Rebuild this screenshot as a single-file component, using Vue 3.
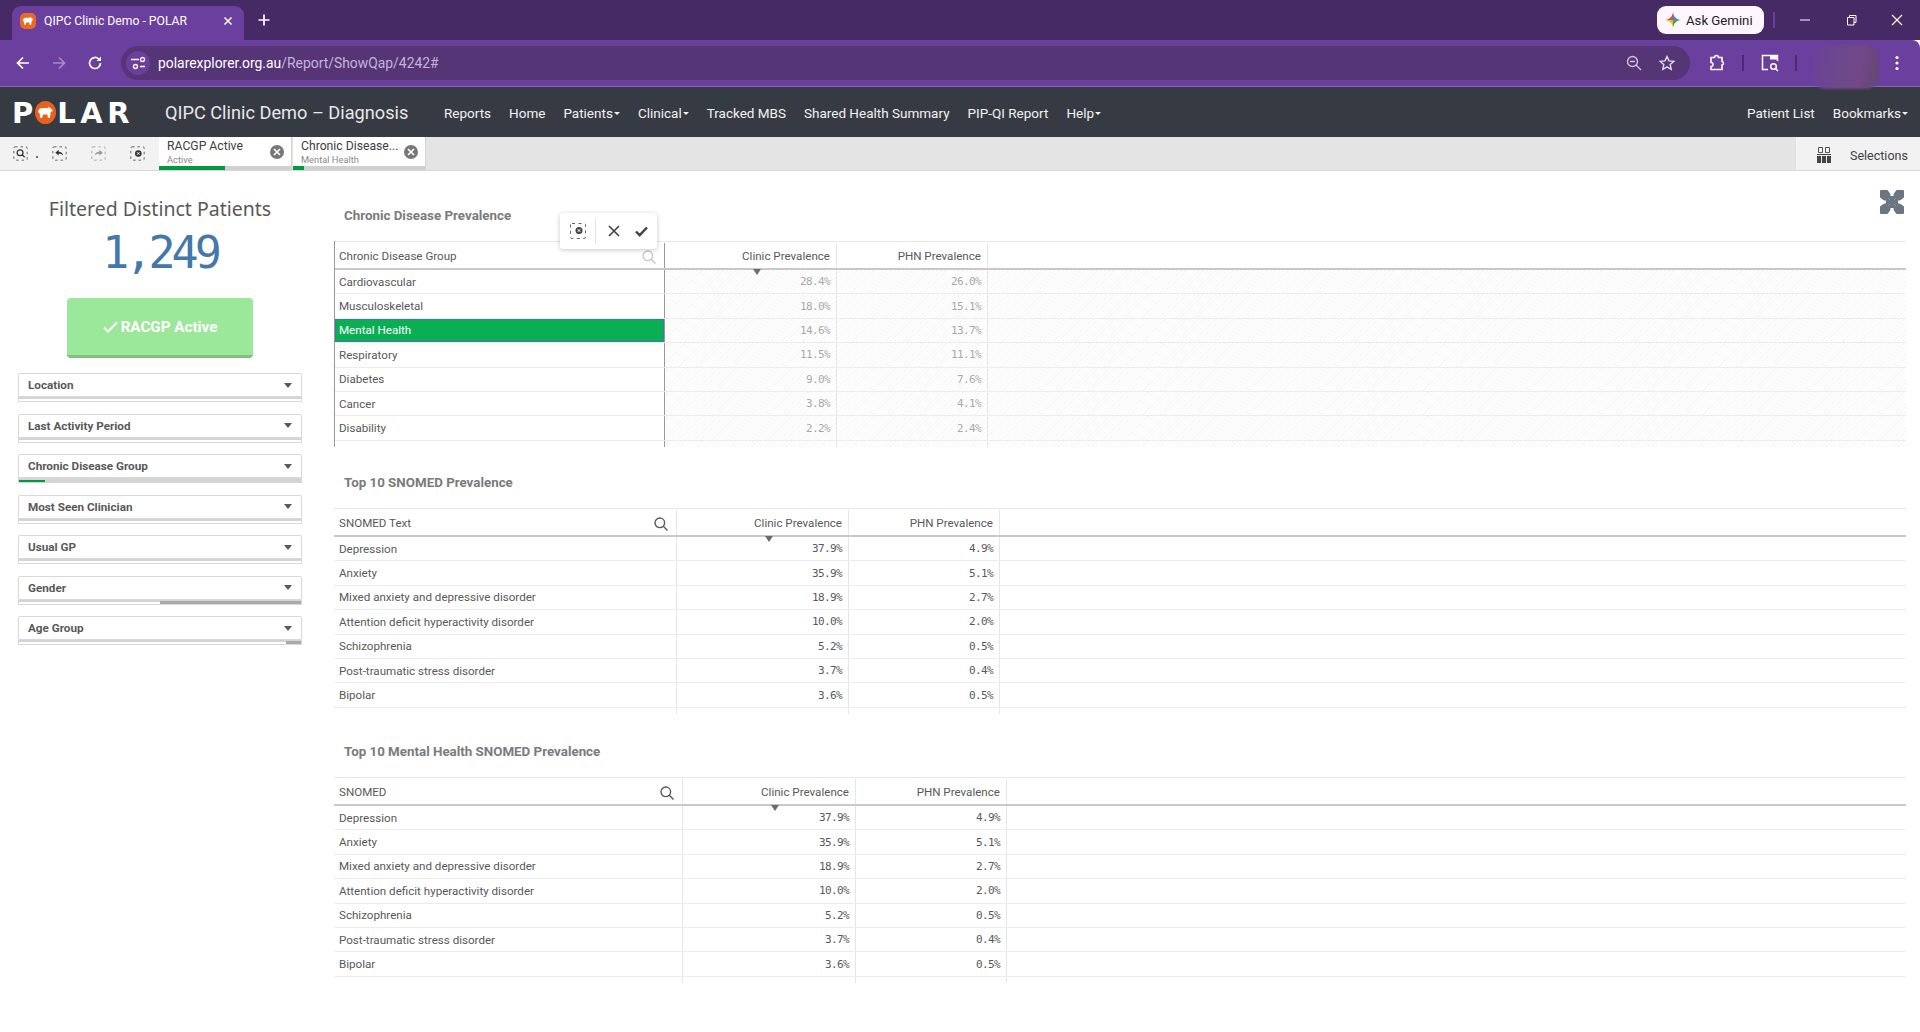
<script setup>
const navLeft = [
  { label: "Reports" },
  { label: "Home" },
  { label: "Patients", caret: true },
  { label: "Clinical", caret: true },
  { label: "Tracked MBS" },
  { label: "Shared Health Summary" },
  { label: "PIP-QI Report" },
  { label: "Help", caret: true },
];

const filters = [
  { name: "Location" },
  { name: "Last Activity Period" },
  { name: "Chronic Disease Group", bar: "green" },
  { name: "Most Seen Clinician" },
  { name: "Usual GP" },
  { name: "Gender", bar: "half" },
  { name: "Age Group", bar: "tiny" },
];

const snomedRows = [
  ["Depression", "37.9%", "4.9%"],
  ["Anxiety", "35.9%", "5.1%"],
  ["Mixed anxiety and depressive disorder", "18.9%", "2.7%"],
  ["Attention deficit hyperactivity disorder", "10.0%", "2.0%"],
  ["Schizophrenia", "5.2%", "0.5%"],
  ["Post-traumatic stress disorder", "3.7%", "0.4%"],
  ["Bipolar", "3.6%", "0.5%"],
  ["Obsessive compulsive disorder", "3.0%", "0.4%"],
];

const tables = [
  {
    key: "t1",
    title: "Chronic Disease Prevalence",
    head: "Chronic Disease Group",
    faded: true,
    rows: [
      ["Cardiovascular", "28.4%", "26.0%"],
      ["Musculoskeletal", "18.0%", "15.1%"],
      ["Mental Health", "14.6%", "13.7%"],
      ["Respiratory", "11.5%", "11.1%"],
      ["Diabetes", "9.0%", "7.6%"],
      ["Cancer", "3.8%", "4.1%"],
      ["Disability", "2.2%", "2.4%"],
      ["", "", ""],
    ],
  },
  { key: "t2", title: "Top 10 SNOMED Prevalence", head: "SNOMED Text", rows: snomedRows },
  {
    key: "t3",
    title: "Top 10 Mental Health SNOMED Prevalence",
    head: "SNOMED",
    rows: [...snomedRows.slice(0, 7), ["", "", ""]],
  },
];
</script>

<template>
  <div class="page">
    <!-- browser chrome -->
    <div class="tabstrip">
      <div class="tab">
        <span class="favicon">
          <svg width="12" height="10" viewBox="0 0 13 10"><path d="M1 4C1 2 3 1.500 5 1.500H8L9 .8l1 .7C11 2 12 3 12 4l-1.500.5L10 9H8.300L8 6.500H4.500L4 9H2.300L2 5.500C1.300 5.500 1 5 1 4z" fill="#fff"/></svg>
        </span>
        <span class="tab-title">QIPC Clinic Demo - POLAR</span>
        <svg class="tab-x" width="10" height="10" viewBox="0 0 10 10"><path d="M1.500 1.500l7 7M8.500 1.500l-7 7" stroke="#fff" stroke-width="1.500"/></svg>
      </div>
      <svg class="tab-plus" width="12" height="12" viewBox="0 0 12 12"><path d="M6 .5v11M.5 6h11" stroke="#fff" stroke-width="1.700"/></svg>
      <div class="gemini">
        <svg width="16" height="16" viewBox="0 0 16 16">
          <path d="M8 0C8.400 4.500 8 8 8 8H0C4.500 7.600 7.600 4.500 8 0z" fill="#e8453c"/>
          <path d="M8 0C8.400 4.500 11.500 7.600 16 8H8z" fill="#4285f4"/>
          <path d="M8 16C7.600 11.500 4.500 8.400 0 8h8z" fill="#fbbc05"/>
          <path d="M8 16c.4-4.500 3.500-7.600 8-8H8z" fill="#34a853"/>
        </svg>
        <span>Ask Gemini</span>
      </div>
      <span class="gem-sep"></span>
      <svg class="win-min" width="12" height="12" viewBox="0 0 12 12"><path d="M1 6h10" stroke="#fff" stroke-width="1"/></svg>
      <svg class="win-max" width="12" height="12" viewBox="0 0 12 12"><path d="M2.500 3.500h6.500v7.500H2.500zM4.500 3.500V1.500H11v7H9" fill="none" stroke="#fff" stroke-width="1"/></svg>
      <svg class="win-close" width="12" height="12" viewBox="0 0 12 12"><path d="M1 1l10 10M11 1L1 11" stroke="#fff" stroke-width="1.100"/></svg>
    </div>

    <div class="toolbar">
      <svg class="tb-back" width="16" height="16" viewBox="0 0 16 16"><path d="M14 8H3M8 2.500L2.500 8 8 13.500" fill="none" stroke="#fff" stroke-width="1.700"/></svg>
      <svg class="tb-fwd" width="16" height="16" viewBox="0 0 16 16"><path d="M2 8h11M8 2.500L13.500 8 8 13.500" fill="none" stroke="#a48cc4" stroke-width="1.700"/></svg>
      <svg class="tb-reload" width="16" height="16" viewBox="0 0 16 16"><path d="M13.500 8A5.500 5.500 0 1 1 11.800 4" fill="none" stroke="#fff" stroke-width="1.700"/><path d="M14 1.500v4.500H9.500z" fill="#fff"/></svg>
      <div class="address">
        <span class="site-info">
          <svg width="16" height="16" viewBox="0 0 16 16"><path d="M1 4.500h8M10 11.500h5" stroke="#fff" stroke-width="1.300"/><circle cx="12.500" cy="4.500" r="2" fill="none" stroke="#fff" stroke-width="1.300"/><circle cx="5.500" cy="11.500" r="2" fill="none" stroke="#fff" stroke-width="1.300"/></svg>
        </span>
        <span class="url"><b>polarexplorer.org.au</b>/Report/ShowQap/4242#</span>
        <svg class="addr-zoom" width="16" height="16" viewBox="0 0 16 16"><circle cx="6.500" cy="6.500" r="5" fill="none" stroke="#cfc4dc" stroke-width="1.400"/><path d="M10 10l5 5M4 6.500h5" stroke="#cfc4dc" stroke-width="1.400"/></svg>
        <svg class="addr-star" width="16" height="16" viewBox="0 0 16 16"><path d="M8 1.500l2 4.400 4.800.5-3.600 3.200 1 4.700L8 11.900l-4.200 2.400 1-4.700L1.200 6.400 6 5.900z" fill="none" stroke="#e4dcec" stroke-width="1.400"/></svg>
      </div>
      <svg class="tb-ext" width="18" height="18" viewBox="0 0 18 18"><path d="M3 3.500h3.500a2 2 0 0 1 4 0H14v4a1.800 1.800 0 0 1 0 3.500v4.500H3v-3a2 2 0 0 0 0-4z" fill="none" stroke="#fff" stroke-width="1.600"/></svg>
      <span class="tb-sep"></span>
      <svg class="tb-search" width="18" height="18" viewBox="0 0 18 18"><path d="M7 15.500H1.500V1.500H16.500V7" fill="none" stroke="#fff" stroke-width="1.500"/><path d="M9 1.500h7.500v4H9z" fill="#fff"/><circle cx="12.500" cy="12.500" r="2.800" fill="none" stroke="#fff" stroke-width="1.500"/><path d="M14.500 14.500l2.500 2.500" stroke="#fff" stroke-width="1.500"/></svg>
      <span class="tb-sep"></span>
      <span class="avatar"></span>
      <svg class="tb-menu" width="4" height="16" viewBox="0 0 4 16"><circle cx="2" cy="2.500" r="1.600" fill="#fff"/><circle cx="2" cy="8" r="1.600" fill="#fff"/><circle cx="2" cy="13.500" r="1.600" fill="#fff"/></svg>
    </div>

    <!-- polar nav -->
    <nav class="nav">
      <div class="logo">
        <span>P</span>
        <span class="logo-o">
          <svg width="17" height="13" viewBox="0 0 13 10"><path d="M1 4C1 2 3 1.500 5 1.500H8L9 .8l1 .7C11 2 12 3 12 4l-1.500.5L10 9H8.300L8 6.500H4.500L4 9H2.300L2 5.500C1.300 5.500 1 5 1 4z" fill="#fff"/></svg>
        </span>
        <span class="logo-lar">LAR</span>
      </div>
      <span class="nav-title">QIPC Clinic Demo – Diagnosis</span>
      <a v-for="n in navLeft" :key="n.label" class="nav-link">{{ n.label }}<i v-if="n.caret" class="caret"></i></a>
      <a class="nav-link push">Patient List</a>
      <a class="nav-link">Bookmarks<i class="caret"></i></a>
    </nav>

    <!-- qlik selections bar -->
    <div class="selbar">
      <div class="sel-tools">
        <span class="tool">
          <svg width="15" height="15" viewBox="0 0 18 18"><rect x="1" y="1" width="16" height="16" rx="1.500" fill="none" stroke="#666" stroke-width="1.200" stroke-dasharray="3 3.500"/><circle cx="8.500" cy="8" r="3.500" fill="none" stroke="#333" stroke-width="1.500"/><path d="M11 10.500l3 3" stroke="#333" stroke-width="1.500"/></svg>
          <i class="tool-dot"></i>
        </span>
        <span class="tool">
          <svg width="15" height="15" viewBox="0 0 18 18"><rect x="1" y="1" width="16" height="16" rx="1.500" fill="none" stroke="#666" stroke-width="1.200" stroke-dasharray="3 3.500"/><path d="M4 8l4-3.500v2.300c3 0 5 1.500 5.500 4.700-1.200-1.700-3-2.300-5.500-2.200V11.500z" fill="#333"/></svg>
        </span>
        <span class="tool">
          <svg width="15" height="15" viewBox="0 0 18 18"><rect x="1" y="1" width="16" height="16" rx="1.500" fill="none" stroke="#aaa" stroke-width="1.200" stroke-dasharray="3 3.500"/><path d="M14 8l-4-3.500v2.300c-3 0-5 1.500-5.500 4.700 1.200-1.700 3-2.300 5.500-2.200V11.500z" fill="#999"/></svg>
        </span>
        <span class="tool">
          <svg width="15" height="15" viewBox="0 0 18 18"><rect x="1" y="1" width="16" height="16" rx="1.500" fill="none" stroke="#666" stroke-width="1.200" stroke-dasharray="3 3.500"/><circle cx="10" cy="9" r="4" fill="#333"/><path d="M8.400 7.400l3.200 3.200M11.600 7.400l-3.200 3.200" stroke="#fff" stroke-width="1.100"/></svg>
        </span>
      </div>
      <div class="chip">
        <div class="chip-body">
          <div class="chip-text">
            <div class="chip-name">RACGP Active</div>
            <div class="chip-val">Active</div>
          </div>
          <span class="chip-x"><svg width="8" height="8" viewBox="0 0 8 8"><path d="M1 1l6 6M7 1L1 7" stroke="#fff" stroke-width="1.700"/></svg></span>
        </div>
        <div class="chip-bar"><i class="g-half"></i></div>
      </div>
      <div class="chip">
        <div class="chip-body">
          <div class="chip-text">
            <div class="chip-name">Chronic Disease...</div>
            <div class="chip-val">Mental Health</div>
          </div>
          <span class="chip-x"><svg width="8" height="8" viewBox="0 0 8 8"><path d="M1 1l6 6M7 1L1 7" stroke="#fff" stroke-width="1.700"/></svg></span>
        </div>
        <div class="chip-bar"><i class="g-small"></i></div>
      </div>
      <div class="selections">
        <svg width="16" height="16" viewBox="0 0 16 16"><path d="M2.500 .5h4v5h-4zM9.500 .5h4v5h-4z" fill="none" stroke="#555"/><path d="M1 7h14v9H1z" fill="#444"/><path d="M5.500 9v7M10.500 9v7M1 8.500h14" stroke="#e8e8e8"/></svg>
        <span>Selections</span>
      </div>
    </div>

    <div class="content">
      <aside class="side">
        <div class="kpi-title">Filtered Distinct Patients</div>
        <div class="kpi-num">1,249</div>
        <div class="racgp">
          <svg width="15" height="12" viewBox="0 0 15 12"><path d="M1 6.500l4 4L14 1.500" fill="none" stroke="#fff" stroke-width="2"/></svg>
          RACGP Active
        </div>
        <div class="filters">
          <div v-for="f in filters" :key="f.name" class="filter" :class="f.bar ? 'bar-' + f.bar : ''">
            <div class="filter-box">
              <span>{{ f.name }}</span>
              <i class="filter-caret"></i>
            </div>
            <div class="filter-bar"><i></i></div>
          </div>
        </div>
      </aside>

      <main class="main">
        <section v-for="t in tables" :key="t.key" class="block" :class="t.key">
          <h3 class="block-title">{{ t.title }}</h3>
          <div class="table" :class="{ faded: t.faded }">
            <div class="row head">
              <div class="cell first">
                {{ t.head }}
                <svg class="search" width="16" height="16" viewBox="0 0 16 16"><circle cx="6.800" cy="6.800" r="4.800" fill="none" stroke="currentColor" stroke-width="1.400"/><path d="M10.300 10.300l4.200 4.200" stroke="currentColor" stroke-width="1.400"/></svg>
              </div>
              <div class="cell num">Clinic Prevalence<i class="sort"></i></div>
              <div class="cell num">PHN Prevalence</div>
              <div class="cell fill"></div>
            </div>
            <div v-for="(r, i) in t.rows" :key="i" class="row" :class="{ picked: r[0] === 'Mental Health' }">
              <div class="cell first">{{ r[0] }}</div>
              <div class="cell num val">{{ r[1] }}</div>
              <div class="cell num val">{{ r[2] }}</div>
              <div class="cell fill"></div>
            </div>
          </div>
        </section>

        <div class="popup">
          <svg width="18" height="18" viewBox="0 0 18 18"><rect x="1.500" y="1.500" width="15" height="15" rx="1.500" fill="none" stroke="#666" stroke-dasharray="3 3.500"/><circle cx="10" cy="8.500" r="3.500" fill="#444"/><path d="M8.600 7.100l2.800 2.800M11.400 7.100l-2.800 2.800" stroke="#fff"/></svg>
          <span class="popup-sep"></span>
          <svg width="14" height="14" viewBox="0 0 14 14"><path d="M2 2l10 10M12 2L2 12" stroke="#444" stroke-width="1.700"/></svg>
          <svg width="15" height="14" viewBox="0 0 15 14"><path d="M2 7.500l3.700 3.700L13 3.500" fill="none" stroke="#444" stroke-width="2.400"/></svg>
        </div>

        <svg class="expand" width="24" height="24" viewBox="0 0 24 24">
          <rect width="24" height="24" rx="1" fill="#6b7680"/>
          <path d="M7.500 0h9L12 6zM7.500 24h9L12 18zM0 7.500v9L6 12zM24 7.500v9L18 12z" fill="#fff"/>
          <path d="M12 3v3M12 18v3M3 12h3M18 12h3" stroke="#fff" stroke-width="3"/>
          <path d="M8 8l2 2M16 8l-2 2M8 16l2-2M16 16l-2-2" stroke="#8d969e" stroke-width="1"/>
        </svg>
      </main>
    </div>
  </div>
</template>

<style scoped>
.page {
  width: 1920px;
  height: 1032px;
  overflow: hidden;
  background: #fff;
  font-family: Roboto, "Noto Sans", sans-serif;
  position: relative;
}

/* browser chrome */
.tabstrip {
  height: 40px;
  background: #462a66;
  display: flex;
  align-items: center;
  color: #fff;
}
.tab {
  width: 232px;
  height: 34px;
  margin: 6px 0 0 12px;
  background: #6b3f9e;
  border-radius: 9px 9px 0 0;
  display: flex;
  align-items: center;
  font: 12.200px Roboto, sans-serif;
  box-sizing: border-box;
  padding: 0 11px 5px 8px;
}
.favicon {
  width: 16px;
  height: 16px;
  border-radius: 5px;
  background: #ea6a22;
  display: flex;
  align-items: center;
  justify-content: center;
}
.tab-title {
  margin-left: 8px;
  flex: 1;
}
.tab-plus {
  margin-left: 14px;
}
.gemini {
  margin-left: auto;
  width: 107px;
  height: 28px;
  background: #fdf6ff;
  color: #222;
  border-radius: 9px;
  display: flex;
  align-items: center;
  gap: 5px;
  padding-left: 8px;
  box-sizing: border-box;
  font: 13.200px Roboto, sans-serif;
}
.gem-sep {
  width: 2px;
  height: 16px;
  background: #6b3f9e;
  margin-left: 9px;
}
.win-min {
  margin-left: 24px;
}
.win-max {
  margin-left: 34px;
}
.win-close {
  margin: 0 17px 0 34px;
}
.toolbar {
  height: 47px;
  background: #6b3f9e;
  border-bottom: 1px solid #8a63b5;
  border-top-right-radius: 8px;
  box-sizing: border-box;
  display: flex;
  align-items: center;
  position: relative;
}
.tb-back {
  margin-left: 15px;
}
.tb-fwd {
  margin-left: 20px;
}
.tb-reload {
  margin-left: 20px;
}
.address {
  margin-left: 18px;
  width: 1569px;
  height: 34px;
  background: #553576;
  border-radius: 17px;
  display: flex;
  align-items: center;
  box-sizing: border-box;
  padding-left: 5px;
}
.site-info {
  width: 24px;
  height: 24px;
  border-radius: 50%;
  background: #6b3f9e;
  display: flex;
  align-items: center;
  justify-content: center;
}
.url {
  margin-left: 8px;
  font: 13.900px Roboto, sans-serif;
  color: #c4b4d8;
}
.url b {
  font-weight: 400;
  color: #fff;
}
.addr-zoom {
  margin-left: auto;
}
.addr-star {
  margin: 0 15px 0 17px;
}
.tb-ext {
  margin-left: 18px;
}
.tb-sep {
  width: 2px;
  height: 16px;
  background: #4a2a72;
  margin: 0 17px 0 16px;
}
.avatar {
  width: 65px;
  height: 43px;
  background: linear-gradient(100deg, #6a4199, #6d4a8a 50%, #74478a 70%, #5e4a6e);
  border-radius: 12px;
  filter: blur(1px);
  position: absolute;
  left: 1813px;
  top: 6px;
  z-index: 2;
}
.tb-menu {
  position: absolute;
  left: 1895px;
  top: 15px;
}

/* nav */
.nav {
  height: 50px;
  background: #363a42;
  display: flex;
  align-items: center;
  color: #f2f2f2;
  font: 13.500px Roboto, sans-serif;
  padding: 1px 12px 0 12px;
  box-sizing: border-box;
}
.logo {
  display: flex;
  align-items: center;
  width: 122px;
  flex: none;
  font: 700 29px/24px "DejaVu Sans", sans-serif;
  color: #fff;
  letter-spacing: 3px;
}
.logo-lar {
  letter-spacing: 4.500px;
}
.logo-o {
  width: 23px;
  height: 23px;
  border-radius: 50%;
  background: #e8611f;
  display: flex;
  align-items: center;
  justify-content: center;
  margin: 0 1px 0 -1px;
}
.nav-title {
  margin-left: 31px;
  font-size: 18.200px;
  width: 279px;
  flex: none;
  color: #e6e8ea;
  white-space: nowrap;
}
.nav-link {
  margin-right: 18px;
  white-space: nowrap;
}
.push {
  margin-left: auto;
}
.nav-link:last-child {
  margin-right: 0;
}
.caret {
  display: inline-block;
  border: 3px solid transparent;
  border-top-color: #f2f2f2;
  border-bottom: 0;
  margin-left: 1px;
  vertical-align: middle;
}

/* selection bar */
.selbar {
  height: 34px;
  background: #e4e4e4;
  border-bottom: 1px solid #d8d8d8;
  box-sizing: border-box;
  display: flex;
}
.sel-tools {
  width: 159px;
  background: #f2f2f2;
  display: flex;
  align-items: center;
  padding-left: 13px;
  box-sizing: border-box;
}
.tool {
  width: 15px;
  height: 15px;
  margin-right: 24px;
  position: relative;
}
.tool-dot {
  position: absolute;
  left: 23px;
  top: 10px;
  width: 2px;
  height: 2px;
  background: #444;
  border-radius: 50%;
}
.chip {
  width: 133px;
  margin-right: 1px;
  display: flex;
  flex-direction: column;
  background: #fff;
  border-right: 1px solid #d4d4d4;
  box-sizing: border-box;
}
.chip-body {
  height: 29px;
  display: flex;
  align-items: center;
  padding: 0 7px 0 8px;
  flex: none;
}
.chip-text {
  flex: 1;
  min-width: 0;
}
.chip-name {
  font-size: 12.200px;
  line-height: 15px;
  color: #404040;
  white-space: nowrap;
}
.chip-val {
  font-size: 9.300px;
  line-height: 11px;
  color: #8a8a8a;
}
.chip-x {
  width: 14px;
  height: 14px;
  border-radius: 50%;
  background: #777;
  display: flex;
  align-items: center;
  justify-content: center;
}
.chip-bar {
  flex: 1;
  background: #d0d0d0;
}
.chip-bar i {
  display: block;
  height: 100%;
  background: #009845;
}
.g-half {
  width: 66px;
}
.g-small {
  width: 11px;
}
.selections {
  margin-left: auto;
  width: 125px;
  background: #f2f2f2;
  border-left: 1px solid #e0e0e0;
  box-sizing: border-box;
  display: flex;
  align-items: center;
  padding: 3px 0 0 20px;
  gap: 18px;
  font-size: 12.500px;
  color: #404040;
}

/* sidebar */
.content {
  display: flex;
}
.side {
  width: 320px;
  flex: none;
  padding: 0 18px;
  box-sizing: border-box;
}
.kpi-title {
  margin-top: 24px;
  text-align: center;
  font: 19.500px/28px "Noto Sans", sans-serif;
  color: #595959;
  white-space: nowrap;
}
.kpi-num {
  margin-top: 2px;
  text-align: center;
  font: 45px/56px "DejaVu Sans Mono", monospace;
  letter-spacing: -4px;
  color: #4477aa;
}
.racgp {
  width: 186px;
  height: 60px;
  margin: 17px auto 15px;
  background: #9be89a;
  border-bottom: 3px solid #7fc07e;
  border-radius: 4px;
  box-sizing: border-box;
  color: #fff;
  font-weight: 700;
  font-size: 15.200px;
  display: flex;
  align-items: center;
  justify-content: center;
  gap: 3px;
}
.filters {
  display: flex;
  flex-direction: column;
  gap: 11.500px;
}
.filter {
  height: 29px;
  display: flex;
  flex-direction: column;
}
.filter-box {
  height: 24px;
  border: 1px solid #d8d8d8;
  border-radius: 2px 2px 0 0;
  box-sizing: border-box;
  display: flex;
  align-items: center;
  justify-content: space-between;
  padding: 0 9px;
  font-size: 11.700px;
  font-weight: 700;
  color: #595959;
}
.filter-caret {
  border: 4px solid transparent;
  border-top: 5px solid #595959;
  border-bottom: 0;
}
.filter-bar {
  height: 5px;
  border: 1px solid #d8d8d8;
  border-top: 2px solid #d4d4d4;
  box-sizing: border-box;
  display: flex;
}
.filter-bar i {
  display: block;
}
.bar-green .filter-bar {
  background: #d4d4d4;
  border-color: #d4d4d4;
}
.bar-green .filter-bar i {
  width: 26px;
  height: 2px;
  background: #009845;
}
.bar-half .filter-bar i {
  width: 141px;
  margin-left: auto;
  background: #a9a9a9;
  height: 3px;
  margin-top: -1px;
}
.bar-tiny .filter-bar i {
  width: 15px;
  margin-left: auto;
  background: #a9a9a9;
  height: 3px;
  margin-top: -1px;
}

/* tables */
.main {
  flex: 1;
  min-width: 0;
  padding: 32px 14px 0;
  position: relative;
}
.t1 {
  margin-bottom: 23px;
}
.t2 {
  margin-bottom: 25px;
}
.block-title {
  margin: 0 0 12px 10px;
  height: 26px;
  font-size: 13.350px;
  line-height: 26px;
  font-weight: 700;
  color: #7b7b7b;
}
.table {
  height: 206px;
  overflow: hidden;
  font-size: 11.600px;
  color: #595959;
  --c1: 330px;
  --c2: 172px;
  --c3: 151px;
}
.t2 .table {
  --c1: 343px;
  --c2: 172px;
}
.t3 .table {
  --c1: 349px;
  --c2: 173px;
}
.row {
  display: grid;
  grid-template-columns: var(--c1) var(--c2) var(--c3) 1fr;
  height: 24.400px;
  box-sizing: border-box;
  border-bottom: 1px solid #ececec;
}
.row.head {
  height: 29px;
  padding-top: 1px;
  border-top: 1px solid #e8e8e8;
  border-bottom: 2px solid #c8c8c8;
}
.cell {
  border-right: 1px solid #e6e6e6;
  padding: 0 6px 0 5px;
  display: flex;
  align-items: center;
  white-space: nowrap;
  position: relative;
}
.num {
  justify-content: flex-end;
}
.val {
  font: 11px "DejaVu Sans Mono", monospace;
  letter-spacing: -.6px;
}
.fill {
  border-right: 0;
}
.search {
  position: absolute;
  right: 7px;
  top: 6px;
  color: #595959;
}
.sort {
  position: absolute;
  left: 88px;
  bottom: -7px;
  border: 4px solid transparent;
  border-top: 6px solid #6b6b6b;
  border-bottom: 0;
  z-index: 1;
}
.table.faded {
  border-left: 1px solid #999;
  --c1: 330px;
}
.faded .first {
  border-right-color: #999;
  padding-left: 4px;
}
.faded .row:not(.head) .val,
.faded .row:not(.head) .fill {
  color: #a8a8a8;
  background: repeating-linear-gradient(135deg, #fff 0 2px, #f7f7f7 2px 3px);
}
.faded .search {
  color: #c8c8c8;
}
.picked .first {
  background: #0aaf54;
  color: #fff;
  box-shadow: inset 0 0 0 1px #4477aa;
}
.popup {
  position: absolute;
  left: 240px;
  top: 42px;
  width: 97px;
  height: 36px;
  background: #fff;
  border-radius: 3px;
  box-shadow: 0 1px 5px rgba(0, 0, 0, .22);
  display: flex;
  align-items: center;
  padding-left: 9px;
  box-sizing: border-box;
  z-index: 3;
}
.popup-sep {
  width: 1px;
  height: 26px;
  background: #e6e6e6;
  margin: 0 11px 0 8px;
}
.popup svg:nth-of-type(3) {
  margin-left: 13px;
}
.expand {
  position: absolute;
  left: 1560px;
  top: 19px;
}
</style>
